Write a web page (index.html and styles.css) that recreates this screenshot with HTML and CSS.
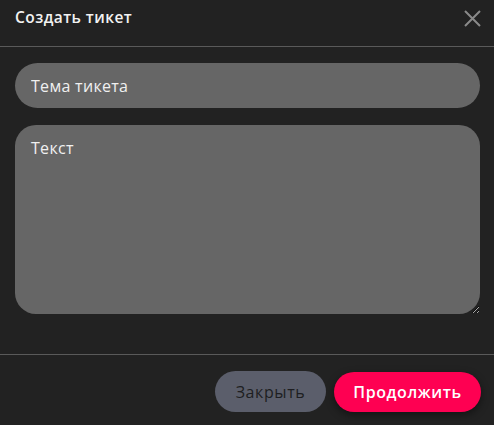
FILE: index.html
```html
<!DOCTYPE html>
<html lang="ru">
<head>
<meta charset="utf-8">
<link rel="stylesheet" href="styles.css">
</head>
<body>
<div class="modal">
  <div class="modal-header">
    <div class="modal-title">Создать тикет</div>
    <button class="close-icon" aria-label="close">
      <svg width="17" height="17" viewBox="0 0 17 17"><path d="M1 1L16 16M16 1L1 16" stroke="#8a8a8a" stroke-width="2" fill="none"/></svg>
    </button>
  </div>
  <div class="modal-body">
    <input class="field" type="text" placeholder="Тема тикета">
    <textarea class="field area" placeholder="Текст"></textarea>
  </div>
  <div class="modal-footer">
    <button class="btn btn-secondary">Закрыть</button>
    <button class="btn btn-primary">Продолжить</button>
  </div>
</div>
</body>
</html>
```
FILE: styles.css
```css
html, body {
  margin: 0;
  padding: 0;
  background: #222222;
  height: 100%;
}
.modal {
  width: 494px;
  height: 425px;
  background: #222222;
  font-family: "Open Sans", "Liberation Sans", sans-serif;
  display: flex;
  flex-direction: column;
}
.modal-header {
  height: 47px;
  box-sizing: border-box;
  border-bottom: 1px solid #5a5a5a;
  display: flex;
  align-items: flex-start;
  justify-content: space-between;
  padding: 7px 13px 0 15px;
}
.modal-title {
  color: #f2f2f2;
  font-size: 15.5px;
  font-weight: 600;
  line-height: 20px;
  letter-spacing: 0.45px;
}
.close-icon {
  background: none;
  border: 0;
  padding: 0;
  margin-top: 3px;
  width: 17px;
  height: 17px;
  display: block;
}
.close-icon svg { display: block; }
.modal-body {
  padding: 16px 14px 40px 15px;
  display: flex;
  flex-direction: column;
  gap: 17px;
  border-bottom: 1px solid #5a5a5a;
}
.field {
  box-sizing: border-box;
  width: 100%;
  background: #666666;
  border: 0;
  outline: none;
  color: #f2f2f2;
  font-family: inherit;
  font-size: 16px;
  font-weight: 500;
  letter-spacing: 0.3px;
  margin: 0;
}
.field::placeholder { color: #f0f0f0; opacity: 1; }
input.field {
  height: 45px;
  border-radius: 23px;
  padding: 0 16px;
}
.area {
  height: 189px;
  border-radius: 21px;
  padding: 12px 16px;
  resize: vertical;
  display: block;
}
.modal-footer {
  display: flex;
  justify-content: flex-end;
  align-items: center;
  gap: 8px;
  padding: 16px 13px 0 0;
}
.btn {
  border: 0;
  font-family: inherit;
  font-size: 16px;
  letter-spacing: 0.6px;
  border-radius: 21px;
  cursor: pointer;
  padding: 0;
}
.btn-secondary {
  width: 111px;
  height: 41px;
  background: #5b5e6b;
  color: #1e1e22;
  font-weight: 400;
}
.btn-primary {
  width: 147px;
  height: 40px;
  background: #fe0052;
  color: #ffffff;
  font-weight: 600;
  box-shadow: 0 3px 8px rgba(0,0,0,0.45);
}
```
